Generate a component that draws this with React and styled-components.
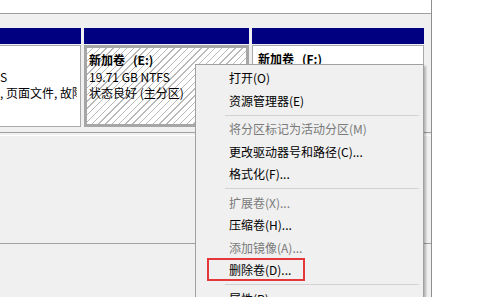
import React from 'react';
import styled, { createGlobalStyle } from 'styled-components';

const Global = createGlobalStyle`
  html, body { margin: 0; padding: 0; }
  body {
    width: 478px; height: 297px; overflow: hidden; background: #fff;
    font-family: "Noto Sans CJK SC", "Noto Sans", sans-serif;
  }
`;

const Screen = styled.div`
  position: relative;
  width: 478px;
  height: 297px;
  overflow: hidden;
  display: flex;
`;

const MainPane = styled.div`
  flex: none;
  width: 431px;
  border-right: 1px solid #8f8f8f;
  background: #f0f0f0;
  display: flex;
  flex-direction: column;
`;

const SidePane = styled.div`
  flex: 1;
  background: #fff;
`;

const ListBottom = styled.div`
  height: 13px;
  background: #fff;
  border-bottom: 1px solid #a0a0a0;
`;

const GapBand = styled.div`
  height: ${p => p.$h}px;
  flex: none;
`;

const DiskRow = styled.div`
  display: flex;
  gap: 3px;
  height: 100px;
  flex: none;
`;

const Partition = styled.div`
  flex: none;
  width: ${p => p.$w}px;
  display: flex;
  flex-direction: column;
  gap: 1px;
  overflow: hidden;
`;

const Header = styled.div`
  height: 16px;
  background: #000080;
  flex: none;
`;

const Body = styled.div`
  height: 82px;
  flex: none;
  box-sizing: border-box;
  background: #fff;
  border: 1px solid #a9a9a9;
  border-left: ${p => (p.$clipLeft ? 'none' : '1px solid #a9a9a9')};
  padding: ${p => (p.$clipLeft ? '6px 0 0 0' : '5px 0 0 5px')};
  overflow: hidden;
`;

const ClipText = styled.div`
  width: ${p => p.$w}px;
  overflow: hidden;
`;

const SelectedBody = styled.div`
  height: 82px;
  flex: none;
  box-sizing: border-box;
  border: 3px solid #a6a6a6;
  padding: 4px 0 0 2px;
  overflow: hidden;
  background: repeating-linear-gradient(
    135deg,
    #ffffff 0px,
    #ffffff 3.8px,
    #b9b9b9 3.8px,
    #b9b9b9 4.8px
  );
`;

const Line = styled.div`
  font-size: 12px;
  line-height: 16.5px;
  height: 16.5px;
  color: #000;
  white-space: nowrap;
  font-weight: ${p => (p.$bold ? 700 : 400)};
`;

const Drive = styled.span`
  margin-left: 8px;
`;

const Divider = styled.div`
  height: 1px;
  flex: none;
  background: ${p => p.$c};
`;

const Menu = styled.div`
  position: absolute;
  left: 195px;
  top: 64px;
  width: 229px;
  box-sizing: border-box;
  background: #f0f0f0;
  border: 1px solid #a0a0a0;
  padding-top: 2px;
  box-shadow: 2px 2px 2px rgba(0, 0, 0, 0.25);
  height: 260px;
`;

const Item = styled.div`
  position: relative;
  height: 22.5px;
  line-height: 22.5px;
  padding-left: 33px;
  font-size: 12px;
  white-space: nowrap;
  color: ${p => (p.$disabled ? '#7a7a7a' : '#000')};
`;

const Separator = styled.div`
  height: 6px;
  display: flex;
  align-items: center;
  margin: 0 4px 0 29px;
  &::after {
    content: '';
    flex: 1;
    height: 1px;
    background: #d2d2d2;
  }
`;

const Highlight = styled.div`
  position: absolute;
  left: 11px;
  top: -1px;
  width: 98px;
  height: 23px;
  box-sizing: border-box;
  border: 2px solid #e5373b;
`;

const menuItems = [
  { t: '打开(O)' },
  { t: '资源管理器(E)' },
  { sep: true },
  { t: '将分区标记为活动分区(M)', d: true },
  { t: '更改驱动器号和路径(C)...' },
  { t: '格式化(F)...' },
  { sep: true },
  { t: '扩展卷(X)...', d: true },
  { t: '压缩卷(H)...' },
  { t: '添加镜像(A)...', d: true },
  { t: '删除卷(D)...', hl: true },
  { sep: true },
  { t: '属性(P)' },
];

export default function App() {
  return (
    <>
      <Global />
      <Screen>
        <MainPane>
          <ListBottom />
          <GapBand $h={14} />
          <DiskRow>
            <Partition $w={81}>
              <Header />
              <Body $clipLeft>
                <ClipText $w={77}>
                  <Line>&nbsp;</Line>
                  <Line>S</Line>
                  <Line>, 页面文件, 故障转储, 主分区)</Line>
                </ClipText>
              </Body>
            </Partition>
            <Partition $w={165}>
              <Header />
              <SelectedBody>
                <Line $bold>新加卷<Drive>(E:)</Drive></Line>
                <Line>19.71 GB NTFS</Line>
                <Line>状态良好 (主分区)</Line>
              </SelectedBody>
            </Partition>
            <Partition $w={172}>
              <Header />
              <Body>
                <Line $bold>新加卷<Drive>(F:)</Drive></Line>
              </Body>
            </Partition>
          </DiskRow>
          <GapBand $h={4} />
          <Divider $c="#a0a0a0" />
          <GapBand $h={2} />
          <Divider $c="#ffffff" />
          <GapBand $h={107} />
          <Divider $c="#a0a0a0" />
        </MainPane>
        <SidePane />
        <Menu>
          {menuItems.map((m, i) =>
            m.sep ? (
              <Separator key={i} />
            ) : (
              <Item key={i} $disabled={m.d}>
                {m.t}
                {m.hl && <Highlight />}
              </Item>
            )
          )}
        </Menu>
      </Screen>
    </>
  );
}
